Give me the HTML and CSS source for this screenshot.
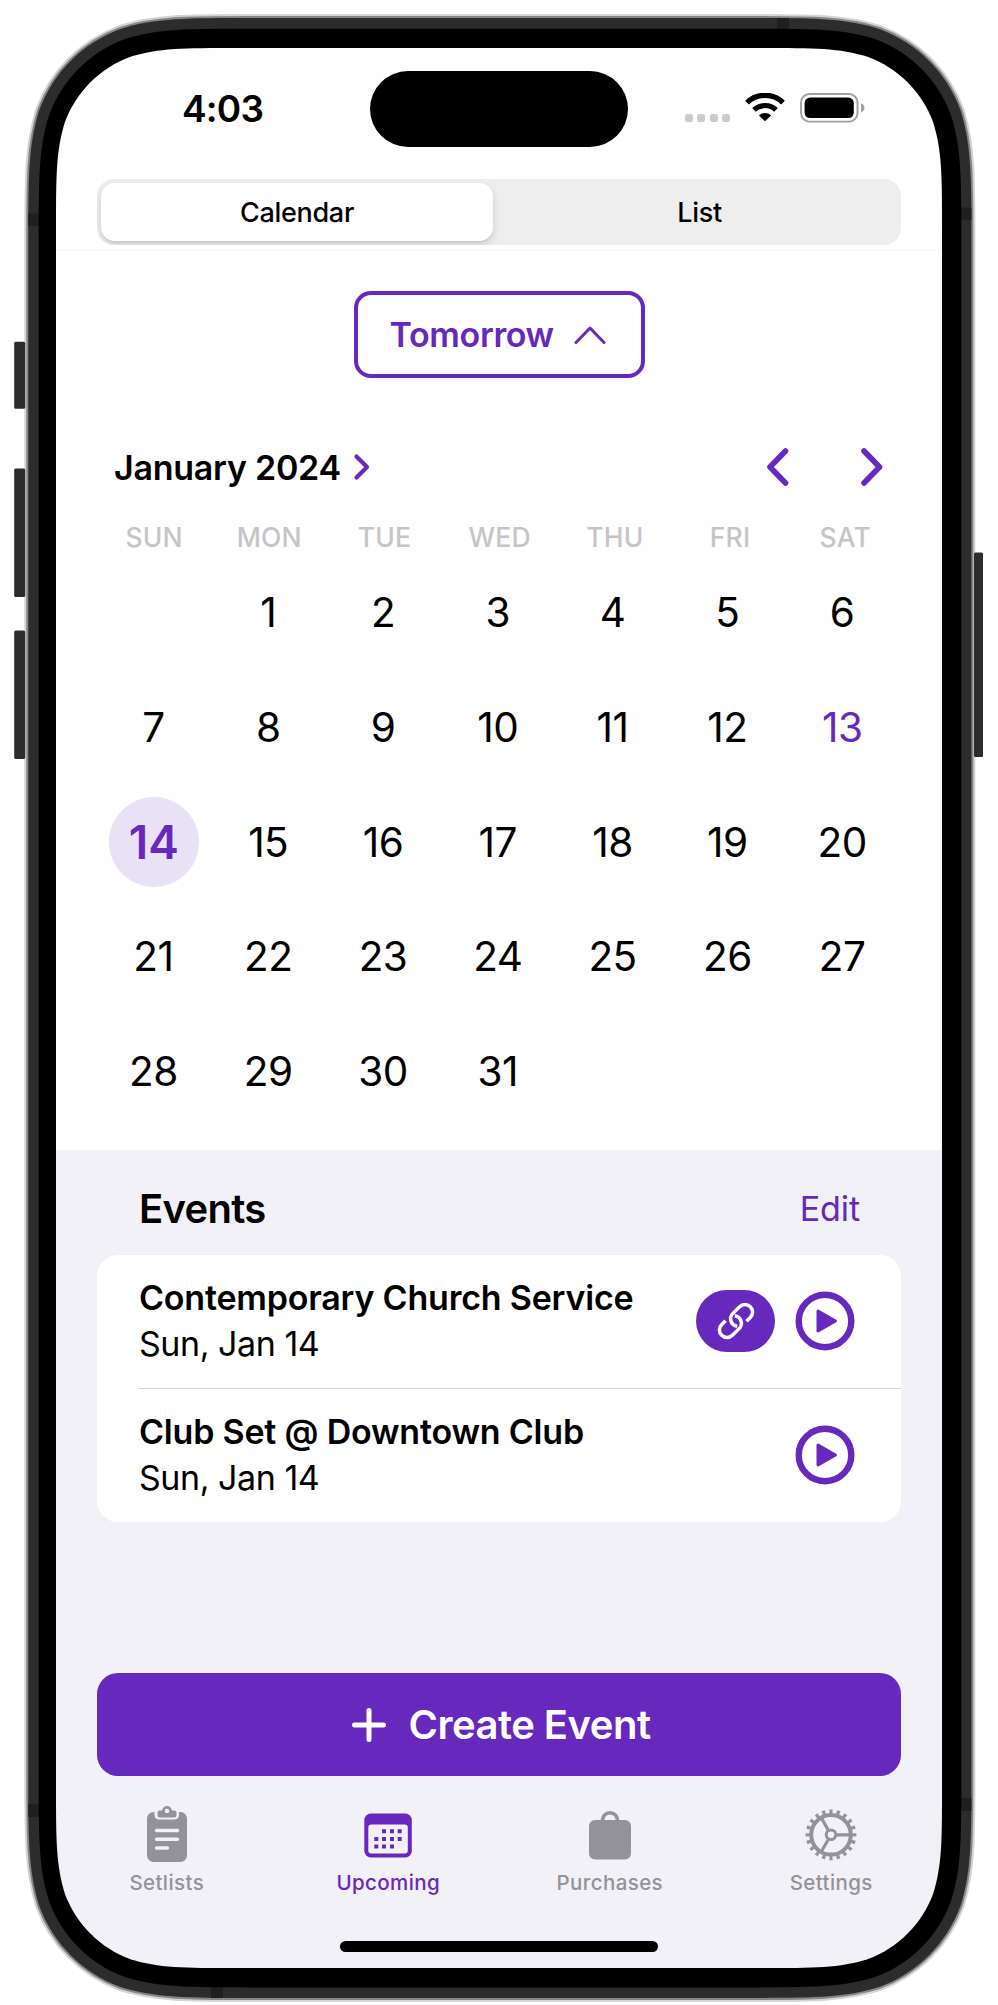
FILE: index.html
```html
<!DOCTYPE html>
<html lang="en">
<head>
<meta charset="utf-8">
<title>Upcoming</title>
<link rel="stylesheet" href="styles.css">
</head>
<body>
<div class="device">
  <main class="screen">
    <header class="status">
      <span class="time">4:03</span>
      <span class="island"></span>
      <span class="indicators">
        <span class="dots"><i></i><i></i><i></i><i></i></span>
        <svg class="wifi" width="40" height="29" viewBox="0 0 40 29" fill="none" stroke="#000"><path d="M2 9.6A26 26 0 0 1 38 9.6" stroke-width="5.4"/><path d="M9 16.9A16 16 0 0 1 31 16.9" stroke-width="5.2"/><path d="M20 28.3L13.9 22.4A8.8 8.8 0 0 1 26.1 22.4Z" fill="#000" stroke="none"/></svg>
        <svg class="battery" width="65" height="30" viewBox="0 0 65 30"><rect x="1" y="1" width="56.5" height="27.6" rx="8.5" fill="none" stroke="#a0a0a0" stroke-width="1.9"/><rect x="4.6" y="4.6" width="49.2" height="20.4" rx="5.5"/><path d="M61 10.2Q64.4 11.6 64.4 14.8T61 19.4Z" fill="#a0a0a0"/></svg>
      </span>
    </header>

    <nav class="segments"><span class="segment active">Calendar</span><span class="segment">List</span></nav>

    <section class="calendar">
      <button class="day-picker"><span>Tomorrow</span><svg width="32" height="20" viewBox="0 0 32 20" fill="none" stroke="currentColor" stroke-width="3" stroke-linecap="round" stroke-linejoin="round"><path d="M2 17.500L16 3L30 17.500"/></svg></button>
      <div class="month">
        <h2>January 2024</h2>
        <svg class="month-more" width="18" height="28" viewBox="0 0 18 28" fill="none" stroke="currentColor" stroke-width="4.2" stroke-linecap="round" stroke-linejoin="round"><path d="M3.500 3.500L14 14L3.500 24.500"/></svg>
        <svg class="arrow" width="24" height="40" viewBox="0 0 24 40" fill="none" stroke="currentColor" stroke-width="5.6" stroke-linecap="round" stroke-linejoin="round"><path d="M20.500 4L5 20L20.500 36"/></svg>
        <svg class="arrow next" width="24" height="40" viewBox="0 0 24 40" fill="none" stroke="currentColor" stroke-width="5.6" stroke-linecap="round" stroke-linejoin="round"><path d="M4 4L19.500 20L4 36"/></svg>
      </div>
      <div class="weekdays"><span>SUN</span><span>MON</span><span>TUE</span><span>WED</span><span>THU</span><span>FRI</span><span>SAT</span></div>
      <div class="days">
        <span></span><span>1</span><span>2</span><span>3</span><span>4</span><span>5</span><span>6</span>
        <span>7</span><span>8</span><span>9</span><span>10</span><span>11</span><span>12</span><span class="today">13</span>
        <span class="selected"><b>14</b></span><span>15</span><span>16</span><span>17</span><span>18</span><span>19</span><span>20</span>
        <span>21</span><span>22</span><span>23</span><span>24</span><span>25</span><span>26</span><span>27</span>
        <span>28</span><span>29</span><span>30</span><span>31</span>
      </div>
    </section>

    <section class="events">
      <div class="events-head"><h2>Events</h2><a>Edit</a></div>
      <div class="card">
        <article class="event">
          <div class="info"><h3>Contemporary Church Service</h3><p>Sun, Jan 14</p></div>
          <span class="link"><svg width="44" height="44" viewBox="-22 -22 44 44" fill="none" stroke="#fff" stroke-width="3.5"><g transform="rotate(-45)"><path d="M7.200 7.600H12.700A7.600 7.600 0 0 0 12.700 -7.600H3.200A7.600 7.600 0 0 0 -2.900 4.600"/><path d="M-7.200 -7.600H-12.700A7.600 7.600 0 0 0 -12.700 7.600H-3.200A7.600 7.600 0 0 0 2.900 -4.600"/></g></svg></span>
          <svg class="play" width="60" height="60" viewBox="0 0 60 60"><circle cx="30" cy="30" r="26.3" fill="none" stroke="currentColor" stroke-width="6.4"/><path d="M23 20L40.5 30L23 40Z" fill="currentColor" stroke="currentColor" stroke-width="3" stroke-linejoin="round"/></svg>
        </article>
        <article class="event">
          <div class="info"><h3>Club Set @ Downtown Club</h3><p>Sun, Jan 14</p></div>
          <svg class="play" width="60" height="60" viewBox="0 0 60 60"><circle cx="30" cy="30" r="26.3" fill="none" stroke="currentColor" stroke-width="6.4"/><path d="M23 20L40.5 30L23 40Z" fill="currentColor" stroke="currentColor" stroke-width="3" stroke-linejoin="round"/></svg>
        </article>
      </div>
      <button class="create"><svg width="36" height="36" viewBox="0 0 36 36" fill="none" stroke="#fff" stroke-width="5" stroke-linecap="round"><path d="M18 3.5V32.5M3.5 18H32.5"/></svg><span>Create Event</span></button>
    </section>

    <nav class="tabs">
      <a class="tab">
        <svg width="56" height="60" viewBox="0 0 56 60"><rect x="8" y="9" width="40" height="50" rx="6.5" fill="#939298"/><path d="M15.5 6V11.5Q15.5 16.5 20.500 16.5H35Q40 16.5 40 11.5V6Z" fill="#f2f1f7"/><path d="M18.500 12V9.500Q18.500 7.500 20.500 7.500H23Q24 3 28 3T33 7.500H35.500Q37.500 7.500 37.500 9.500V12Q37.500 14.500 35 14.500H21Q18.500 14.500 18.500 12Z" fill="#939298"/><circle cx="28" cy="8" r="2.300" fill="#f2f1f7"/><path d="M17.500 27.500H38.500M17.500 36.200H38.500M17.500 45H28.500" stroke="#f2f1f7" stroke-width="3.400" stroke-linecap="round"/></svg>
        <span>Setlists</span>
      </a>
      <a class="tab active">
        <svg width="56" height="60" viewBox="0 0 56 60"><rect x="4.300" y="10.500" width="47.500" height="44" rx="6.500" fill="currentColor"/><rect x="8.300" y="21.500" width="39.500" height="29" rx="3" fill="#f2f1f7"/><g fill="currentColor"><path d="M22 26.200h4v4h-4zM30 26.200h4v4h-4zM37.700 26.200h4v4h-4zM14.300 34h4v4h-4zM22 34h4v4h-4zM30 34h4v4h-4zM37.700 34h4v4h-4zM14.300 41.600h4v4h-4zM22 41.600h4v4h-4zM30 41.600h4v4h-4z"/></g></svg>
        <span>Upcoming</span>
      </a>
      <a class="tab">
        <svg width="56" height="60" viewBox="0 0 56 60"><rect x="7" y="17" width="42" height="39.500" rx="6" fill="currentColor"/><path d="M20.500 18C20.500 7 35.500 7 35.500 18" fill="none" stroke="currentColor" stroke-width="3.400"/></svg>
        <span>Purchases</span>
      </a>
      <a class="tab">
        <svg width="56" height="60" viewBox="-28 -31.800 56 60" fill="none" stroke="currentColor"><circle r="19.800" stroke-width="4"/><circle r="23.200" stroke-width="4.400" stroke-dasharray="3.200 4.088" stroke-dashoffset="1.600" pathLength="145.760"/><circle r="4.800" stroke-width="3"/><path d="M6 0H19M-3 -5.200L-9.500 -16.500M-3 5.200L-9.500 16.500" stroke-width="3.200"/></svg>
        <span>Settings</span>
      </a>
    </nav>
    <footer class="home"><span class="home-bar"></span></footer>
  </main>

  <svg class="frame" width="998" height="2005" viewBox="0 0 998 2005">
    <defs>
      <path id="shell" d="M251.500 18H748.200C812.500 18 844.600 18 879.200 28.900C917 42.700 946.700 72.400 960.500 110.200C971.400 144.800 971.400 176.900 971.400 241.200V1774.800C971.400 1839.100 971.400 1871.200 960.500 1905.800C946.700 1943.600 917 1973.300 879.200 1987.100C844.600 1998 812.500 1998 748.200 1998H251.500C187.200 1998 155.100 1998 120.500 1987.100C82.700 1973.300 53 1943.600 39.200 1905.800C28.300 1871.200 28.300 1839.100 28.300 1774.800V241.200C28.300 176.900 28.300 144.800 39.200 110.200C53 72.400 82.700 42.700 120.500 28.900C155.100 18 187.200 18 251.500 18Z"/>
      <path id="glass" d="M236.400 48H761.600C813.600 48 839.500 48 867.500 56.800C898 67.900 922.100 92 933.200 122.500C942 150.500 942 176.400 942 228.400V1787.600C942 1839.600 942 1865.500 933.200 1893.500C922.100 1924 898 1948.100 867.500 1959.200C839.500 1968 813.600 1968 761.600 1968H236.400C184.400 1968 158.500 1968 130.500 1959.200C100 1948.100 75.900 1924 64.800 1893.500C56 1865.500 56 1839.600 56 1787.600V228.400C56 176.400 56 150.500 64.800 122.500C75.900 92 100 67.900 130.500 56.800C158.500 48 184.400 48 236.400 48Z"/>
      <mask id="cutout"><rect width="998" height="2005" fill="#fff"/><use href="#glass" fill="#000"/></mask>
    </defs>
    <g mask="url(#cutout)">
      <use href="#shell" fill="none" stroke="#d4d4d4" stroke-width="8"/>
      <use href="#shell" fill="none" stroke="#868686" stroke-width="4"/>
      <use href="#shell" fill="#2c2c2c"/>
      <path d="M28.300 213.500H40V226H28.300ZM28.300 1804H40V1817H28.300ZM777 18H789V30H777ZM211 1986H223V1998H211ZM960 207.500H971.400V220H960ZM960 1798H971.400V1811H960Z" fill="#1f1f1f"/>
      <path d="M248.100 28.700H751.900C812.200 28.700 842.300 28.700 874.800 39C910.200 51.900 938.100 79.800 951 115.200C961.300 147.700 961.300 177.800 961.300 238.100V1778C961.300 1838.300 961.300 1868.400 951 1900.900C938.100 1936.300 910.200 1964.200 874.800 1977.100C842.300 1987.400 812.200 1987.400 751.900 1987.400H248.100C187.800 1987.400 157.700 1987.400 125.200 1977.100C89.800 1964.200 61.900 1936.300 49 1900.900C38.700 1868.400 38.700 1838.300 38.700 1778V238.100C38.700 177.800 38.700 147.700 49 115.200C61.900 79.800 89.800 51.900 125.200 39C157.700 28.700 187.800 28.700 248.100 28.700Z"/>
    </g>
    <g fill="#2c2c2c"><rect x="14.200" y="341.800" width="11" height="67" rx="1.500"/><rect x="14.200" y="468.500" width="11" height="128.500" rx="1.500"/><rect x="14.200" y="630.500" width="11" height="128.500" rx="1.500"/><rect x="974" y="552.500" width="9" height="204.500" rx="1.500"/></g>
  </svg>
</div>
</body>
</html>
```
FILE: styles.css
```css
* { box-sizing: border-box; }
body { margin: 0; background: #fff; font-family: Inter, "Liberation Sans", sans-serif; color: #000; }
h2, h3, p { margin: 0; }
button { font: inherit; border: 0; padding: 0; }
svg { display: block; flex: none; }
.device { position: relative; width: 998px; height: 2005px; padding: 48px 56px 37px; overflow: hidden; }
.frame { position: absolute; inset: 0; pointer-events: none; }
.screen { display: flex; flex-direction: column; width: 886px; height: 1920px; overflow: hidden; border-radius: 100px; background: #fefefe; }

.status { display: grid; grid-template-columns: 314px 258px 1fr; height: 131px; padding-top: 23px; }
.time { font-size: 37px; line-height: 75px; font-weight: 600; padding-left: 126px; letter-spacing: -0.8px; }
.island { height: 76px; border-radius: 38px; background: #000; }
.indicators { display: flex; padding-left: 57px; }
.dots { display: flex; gap: 4.4px; margin-top: 43px; }
.dots i { width: 8px; height: 8px; border-radius: 2.5px; background: #cbcbcb; }
.wifi { margin: 22px 0 0 15px; }
.battery { margin: 21.5px 0 0 15px; }

.segments { display: grid; grid-template-columns: 392px 1fr; height: 66px; margin: 0 41px; padding: 4px; border-radius: 17px; background: #eee; overflow: hidden; }
.segment { padding-left: 9px; text-align: center; font-size: 27px; line-height: 60px; font-weight: 500; letter-spacing: -0.3px; }
.segment.active { height: 58px; padding-left: 0; border-radius: 14px; background: #fff; box-shadow: 0 4px 10px #0002, 0 2px 2px #0000000d; }

.calendar { height: 900.5px; margin-top: 4px; border-top: 2px solid #fafafa; padding-top: 40px; color: #6728bd; flex: none; }
.day-picker { display: flex; align-items: center; justify-content: space-between; width: 291px; height: 87px; margin: 0 auto; padding: 0 35px 0 32px; border: 4px solid #6728bd; border-radius: 17px; background: #fff; color: #6728bd; font-size: 34px; font-weight: 600; letter-spacing: -0.35px; }
.month { display: flex; align-items: center; height: 60px; margin-top: 59px; padding: 0 58px; }
.month h2 { color: #000; font-size: 34px; font-weight: 600; letter-spacing: -0.25px; width: 239px; white-space: nowrap; }
.month-more { margin-right: auto; }
.arrow.next { margin-left: 71px; }
.weekdays { display: grid; grid-template-columns: repeat(7, 115.2px); margin-left: 40.5px; margin-top: 1px; height: 57.5px; }
.weekdays span { text-align: center; color: #c5c5c7; font-size: 26.5px; font-weight: 500; line-height: 40px; margin-top: 19px; letter-spacing: 0.2px; }
.days { display: grid; grid-template-columns: repeat(7, 114.8px); grid-auto-rows: 114.7px; margin-left: 40px; color: #000; }
.days > span { display: flex; align-items: center; justify-content: center; font-size: 40.5px; letter-spacing: -0.5px; }
.days > .today { color: #6728bd; }
.days > .selected { padding-left: 1px; }
.selected b { width: 90px; height: 90px; border-radius: 50%; background: #e9e2f6; color: #6728bd; font-size: 46px; line-height: 90px; font-weight: 600; text-align: center; letter-spacing: 0; }

.events { height: 641.5px; padding: 0 41px; background: #f2f1f7; flex: none; }
.events-head { display: flex; justify-content: space-between; align-items: center; height: 105px; padding: 12px 41px 0 42px; }
.events-head h2 { font-size: 40px; font-weight: 600; letter-spacing: -0.7px; }
.events-head a { color: #6728bd; font-size: 34px; letter-spacing: -0.1px; }
.card { height: 267px; border-radius: 21px; background: #fff; }
.event { display: flex; align-items: center; height: 133px; margin-left: 41px; padding-right: 46px; }
.event + .event { border-top: 1px solid #d8d8da; height: 133px; }
.info { flex: 1; padding-left: 1px; }
.info h3 { font-size: 34px; line-height: 46px; font-weight: 600; letter-spacing: -0.2px; white-space: nowrap; }
.info p { font-size: 34px; line-height: 46px; letter-spacing: -0.45px; }
.link { display: grid; place-items: center; width: 79px; height: 62px; margin-right: 20px; border-radius: 31px; background: #6728bd; }
.play { color: #6728bd; }
.create { display: flex; align-items: center; justify-content: center; gap: 21px; width: 804px; height: 103px; margin-top: 151.5px; padding-left: 4px; border-radius: 21px; background: #6728bd; color: #fff; font-size: 40px; font-weight: 600; letter-spacing: -0.5px; }

.tabs { display: grid; grid-template-columns: repeat(4, 221.5px); height: 150px; padding-top: 12px; background: #f2f1f7; flex: none; }
.tab { display: flex; flex-direction: column; align-items: center; color: #939298; font-size: 20.5px; line-height: 28px; font-weight: 500; letter-spacing: 0.4px; }
.tab.active { color: #6728bd; }
.tab span { margin-top: 5.5px; }
.home { flex: 1; display: flex; justify-content: center; background: #f2f1f7; }
.home-bar { width: 318px; height: 10.5px; border-radius: 5.5px; background: #000; }
```
